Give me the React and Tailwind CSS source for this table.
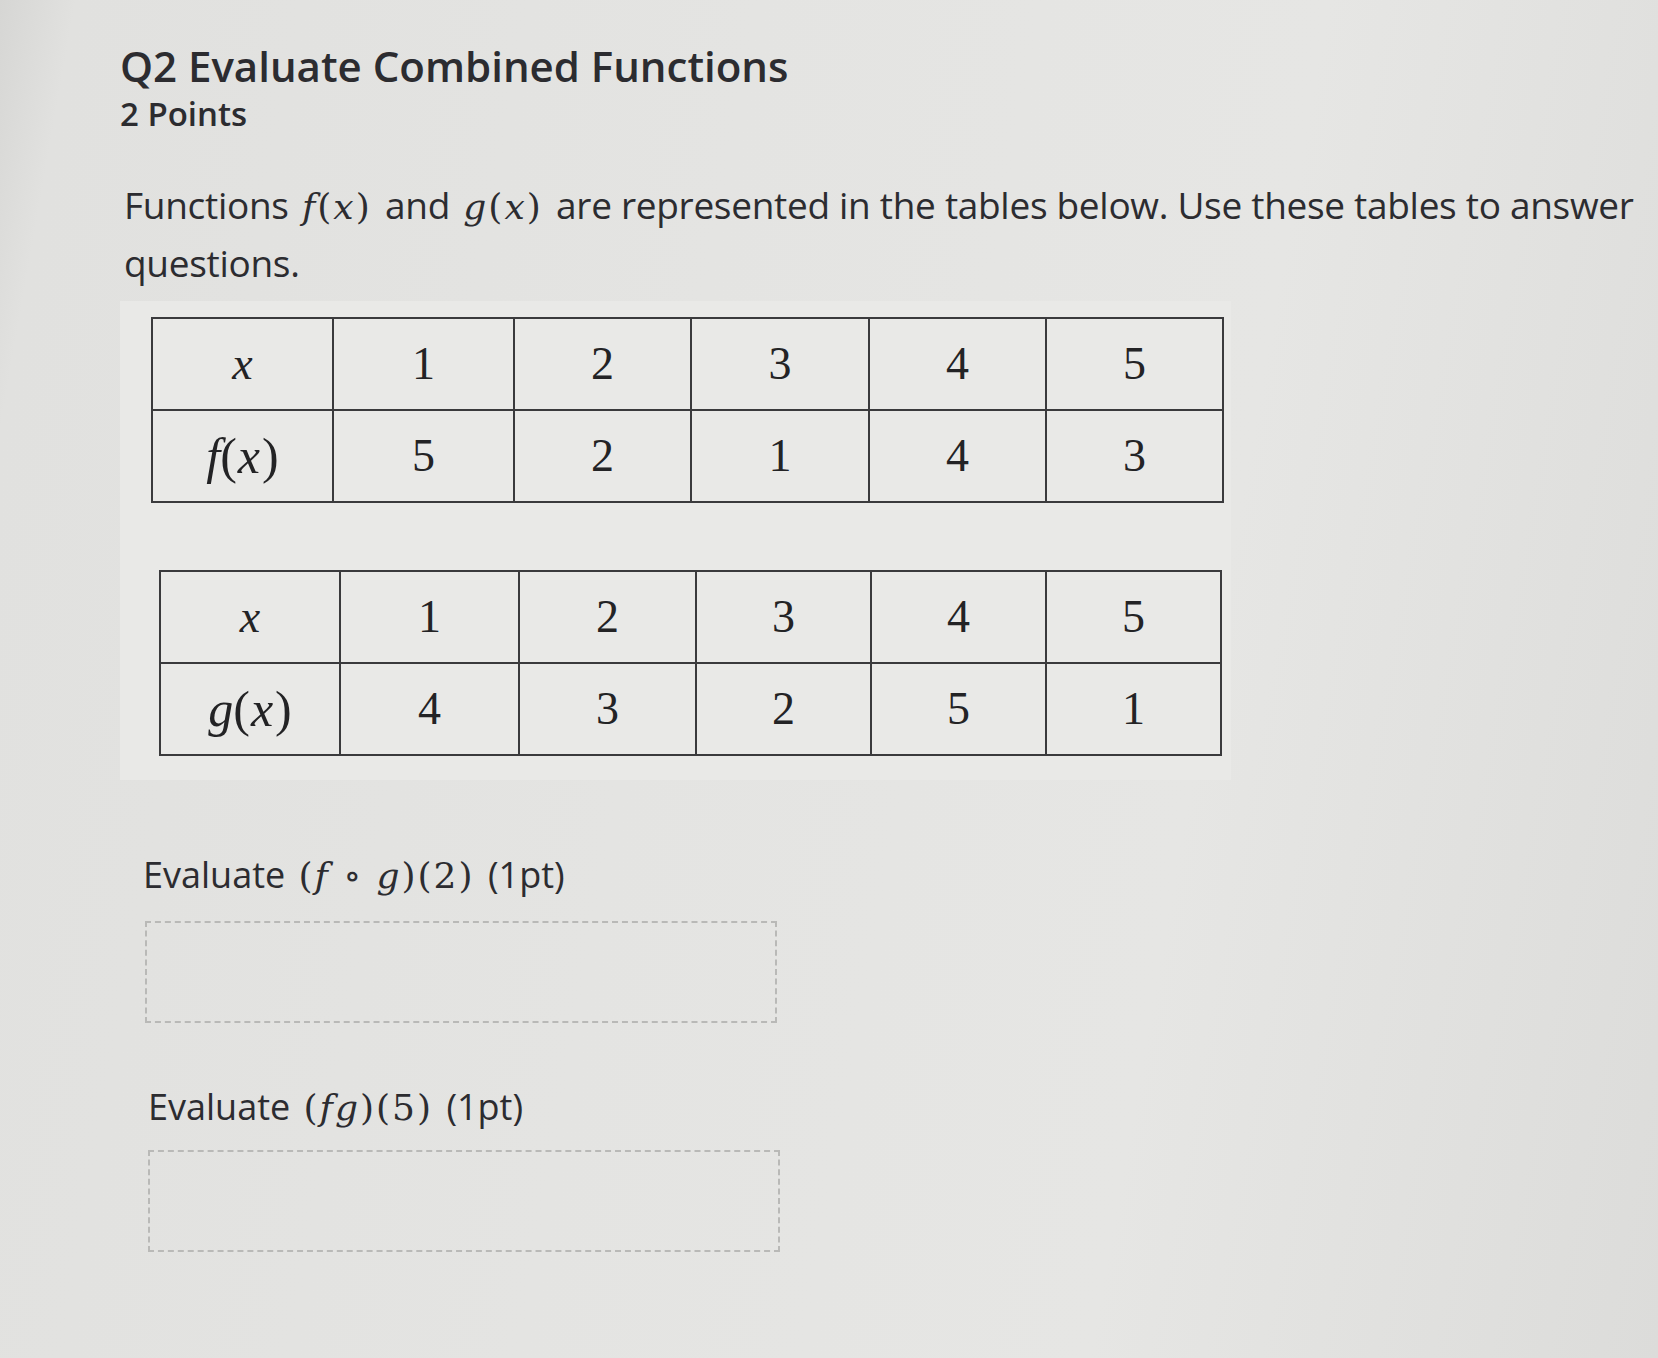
const xs = [1, 2, 3, 4, 5];

function FnLabel({ name }) {
  return (
    <span>
      <i>{name}</i>(<i className="pl-[1px] pr-[2px]">x</i>)
    </span>
  );
}

function ValueTable({ name, values, widths, className }) {
  return (
    <table
      className={`table-fixed border-collapse font-['Liberation_Serif',serif] text-[46px] leading-none text-[#232325] ${className}`}
    >
      <colgroup>
        {widths.map((w, i) => (
          <col key={i} style={{ width: w }} />
        ))}
      </colgroup>
      <tbody>
        <tr className="h-[92px]">
          <td className="border-2 border-[#3a3a3c] text-center">
            <i>x</i>
          </td>
          {xs.map((x) => (
            <td key={x} className="border-2 border-[#3a3a3c] text-center">
              {x}
            </td>
          ))}
        </tr>
        <tr className="h-[92px]">
          <td className="border-2 border-[#3a3a3c] text-center text-[50px]">
            <FnLabel name={name} />
          </td>
          {values.map((v, i) => (
            <td key={i} className="border-2 border-[#3a3a3c] text-center">
              {v}
            </td>
          ))}
        </tr>
      </tbody>
    </table>
  );
}

// KaTeX-ish inline math
function M({ children }) {
  return (
    <span className="mx-[4px] font-['DejaVu_Serif',serif] text-[36px] tracking-[2px]">{children}</span>
  );
}

function AnswerBox() {
  return <div className="h-[102px] w-[632px] border-2 border-dashed border-[#b9b9b7]" />;
}

export default function App() {
  return (
    <div className="min-h-[1358px] w-[1658px] overflow-hidden bg-[linear-gradient(100deg,#d6d6d4_0%,#e1e1df_4%,#e4e4e2_40%,#e6e6e4_70%,#dcdcda_100%)] font-['Open_Sans',sans-serif] text-[#2c2c30]">
      <div className="pl-[120px] pt-[41px]">
        <h1 className="text-[42px] font-semibold leading-[50px]">Q2 Evaluate Combined Functions</h1>
        <div className="mt-[2px] text-[33px] font-semibold leading-[42px]">2 Points</div>

        <p className="mt-[42px] pl-[4px] text-[37px] leading-[56px] whitespace-nowrap tracking-[-0.3px]">
          Functions <M><i>f</i>(<i>x</i>)</M> and <M><i>g</i>(<i>x</i>)</M> are represented in the
          tables below. Use these tables to answer
          <br />
          questions.
        </p>

        <div className="mt-[10px] w-[1111px] bg-[#e9e9e7] pb-[24px] pl-[31px] pt-[16px]">
          <ValueTable
            name="f"
            values={[5, 2, 1, 4, 3]}
            widths={[181, 181, 177, 178, 177, 177]}
            className="w-[1071px]"
          />
          <ValueTable
            name="g"
            values={[4, 3, 2, 5, 1]}
            widths={[180, 179, 177, 175, 175, 175]}
            className="ml-[8px] mt-[67px] w-[1061px]"
          />
        </div>

        <div className="mt-[70px] pl-[23px]">
          <div className="text-[36px] leading-[50px]">
            Evaluate <M>(<i>f</i> ∘ <i>g</i>)(2)</M> (1pt)
          </div>
          <div className="ml-[2px] mt-[20px]">
            <AnswerBox />
          </div>
        </div>

        <div className="mt-[59px] pl-[28px]">
          <div className="text-[36px] leading-[50px]">
            Evaluate <M>(<i>f</i><i>g</i>)(5)</M> (1pt)
          </div>
          <div className="mt-[17px]">
            <AnswerBox />
          </div>
        </div>
      </div>
    </div>
  );
}
